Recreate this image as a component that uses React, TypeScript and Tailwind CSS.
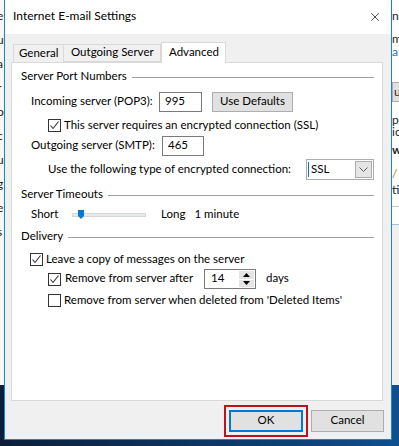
import { X } from "lucide-react";

function Check({ checked }: { checked: boolean }) {
  return (
    <span className="flex h-[13px] w-[13px] shrink-0 items-center justify-center border border-[#333333] bg-white">
      {checked && (
        <svg width="11" height="11" viewBox="0 0 11 11">
          <path d="M1.5 5.5 L4 8.5 L9.5 1.5" fill="none" stroke="#333333" strokeWidth="1.1" />
        </svg>
      )}
    </span>
  );
}

function GroupTitle({ title, className }: { title: string; className?: string }) {
  return (
    <div className={`flex h-[14px] items-center gap-[5px] ${className ?? ""}`}>
      <span className="pb-[2px]">{title}</span>
      <span className="h-px flex-1 bg-[#a0a0a0]" />
    </div>
  );
}

export default function App() {
  return (
    <div
      className="relative h-[446px] w-[399px] overflow-hidden whitespace-nowrap bg-gradient-to-r from-[#0a1f3c] via-[#0b3563] to-[#0e4f8f] text-[11.5px] leading-none text-black"
      style={{ fontFamily: 'Lato, "Liberation Sans", sans-serif' }}
    >
      {/* window behind the dialog */}
      <div className="flex h-[385px] w-full justify-between bg-[#f7f7f7] text-[12px] text-[#222]">
        <div className="flex flex-col gap-[14px] pt-[10px]">
          {["e", "u", "a", "r", "o", "c", "u", "g", "e", "s"].map((c, i) => (
            <span key={i} className="-ml-[3px] block h-[10px]">
              {c}
            </span>
          ))}
        </div>
        <div className="flex w-[7px] flex-col overflow-hidden bg-white">
          <span className="mt-[10px] h-[10px]">n</span>
          <span className="mt-[13px] h-[10px]">me</span>
          <span className="mt-[3px] h-[10px] text-[#1a6fc0]">a</span>
          <span className="mt-[26px] flex h-[20px] items-center border-y border-l border-[#adadad] bg-[#e1e1e1] pl-px">u</span>
          <span className="mt-[12px] h-[10px]">pr</span>
          <span className="mt-[2px] h-[10px]">ic</span>
          <span className="mt-[8px] h-[10px] font-bold">w</span>
          <span className="mt-[14px] h-[10px] text-[#c08000]">/</span>
          <span className="mt-[6px] h-[10px]">ti</span>
          <span className="mt-[12px] h-px bg-[#c8c8c8]" />
          <span className="mt-[17px] h-px bg-[#9cc3e6]" />
          <span className="flex-1 bg-[#f0f0f0]" />
        </div>
      </div>

      {/* dialog */}
      <div className="absolute left-[4px] top-0 flex h-[440px] w-[388px] flex-col border-x border-b border-[#1883d7] bg-[#f0f0f0]">
        <div className="flex h-[34px] shrink-0 items-center justify-between bg-white pl-[8px] pr-[9px]">
          <span className="pb-[2px] text-[12px]">Internet E-mail Settings</span>
          <X size={14} strokeWidth={1.2} className="text-black" />
        </div>

        {/* tabs */}
        <div className="mt-[8px] flex h-[20px] items-end pl-[8px]">
          <div className="flex h-[18px] w-[51px] items-center border border-b-0 border-[#d9d9d9] pb-[2px] pl-[5px]">General</div>
          <div className="flex h-[18px] w-[97px] items-center border-y border-r border-[#d9d9d9] pb-[2px] pl-[7px]">Outgoing Server</div>
          <div className="relative z-10 -mb-px flex h-[21px] w-[65px] items-center border border-b-0 border-[#d9d9d9] bg-white pb-[3px] pl-[7px]">Advanced</div>
        </div>

        {/* panel */}
        <div className="ml-[6px] flex h-[339px] w-[372px] flex-col border border-[#d9d9d9] bg-white pl-[9px] pr-[8px]">
          <GroupTitle title="Server Port Numbers" className="mt-[7px]" />

          <div className="mt-[8px] flex h-[20px] items-center">
            <span className="ml-[10px] w-[128px] pb-[2px]">Incoming server (POP3):</span>
            <div className="flex h-[20px] w-[43px] items-center border border-[#7a7a7a] pb-[2px] pl-[5px]">995</div>
            <button className="ml-[10px] h-[20px] w-[81px] border border-[#adadad] bg-[#e1e1e1] pb-[2px]">Use Defaults</button>
          </div>

          <div className="mt-[7px] flex h-[13px] items-center gap-[3px] pl-[27px]">
            <Check checked />
            <span className="pb-[2px]">This server requires an encrypted connection (SSL)</span>
          </div>

          <div className="mt-[4px] flex h-[20px] items-center">
            <span className="ml-[10px] w-[131px] pb-[2px]">Outgoing server (SMTP):</span>
            <div className="flex h-[20px] w-[42px] items-center border border-[#7a7a7a] pb-[2px] pl-[5px]">465</div>
          </div>

          <div className="mt-[3px] flex h-[21px] items-center">
            <span className="ml-[27px] w-[258px] pb-[2px]">Use the following type of encrypted connection:</span>
            <div className="flex h-[21px] w-[68px] items-center border border-[#adadad] bg-white p-px">
              <span className="mr-[2px] h-[15px] w-px bg-[#0078d7]" />
              <span className="flex-1 pb-[2px]">SSL</span>
              <span className="flex h-[17px] w-[17px] items-center justify-center border border-[#adadad] bg-[#e5e5e5]">
                <svg width="9" height="5" viewBox="0 0 9 5">
                  <path d="M0.5 0.5 L4.5 4.5 L8.5 0.5" fill="none" stroke="#606060" strokeWidth="1" />
                </svg>
              </span>
            </div>
          </div>

          <GroupTitle title="Server Timeouts" className="mt-[8px]" />

          <div className="mt-[6px] flex h-[14px] items-center">
            <span className="ml-[10px] w-[41px] pb-[2px]">Short</span>
            <div className="relative h-[4px] w-[74px] border border-[#d6d6d6] bg-[#e7eaea]">
              <svg className="absolute -top-[4px] left-[5px]" width="6" height="9" viewBox="0 0 6 9">
                <path d="M0 0 H6 V6 L3 9 L0 6 Z" fill="#0078d7" />
              </svg>
            </div>
            <span className="ml-[15px] pb-[2px]">Long</span>
            <span className="ml-[9px] pb-[2px]">1 minute</span>
          </div>

          <GroupTitle title="Delivery" className="mt-[8px]" />

          <div className="mt-[9px] flex h-[13px] items-center gap-[3px] pl-[9px]">
            <Check checked />
            <span className="pb-[2px]">Leave a copy of messages on the server</span>
          </div>

          <div className="mt-[3px] flex h-[20px] items-center pl-[27px]">
            <Check checked />
            <span className="ml-[4px] w-[139px] pb-[2px]">Remove from server after</span>
            <div className="flex h-[20px] w-[52px] items-center border border-[#7a7a7a]">
              <span className="flex-1 pb-[2px] pl-[6px]">14</span>
              <div className="mr-px flex h-[16px] w-[15px] flex-col gap-px">
                <span className="flex flex-1 items-center justify-center bg-[#e5e5e5]">
                  <svg width="7" height="4" viewBox="0 0 7 4"><path d="M0 4 L3.5 0 L7 4 Z" fill="#000" /></svg>
                </span>
                <span className="flex flex-1 items-center justify-center bg-[#e5e5e5]">
                  <svg width="7" height="4" viewBox="0 0 7 4"><path d="M0 0 L3.5 4 L7 0 Z" fill="#000" /></svg>
                </span>
              </div>
            </div>
            <span className="ml-[10px] pb-[3px]">days</span>
          </div>

          <div className="mt-[5px] flex h-[13px] items-center gap-[3px] pl-[27px]">
            <Check checked={false} />
            <span className="pb-[2px]">Remove from server when deleted from 'Deleted Items'</span>
          </div>
        </div>

        {/* buttons */}
        <div className="mt-[4px] flex justify-end gap-[3px] pr-[7px]">
          <div className="border-2 border-[#c0101a] p-[3px]">
            <button className="h-[22px] w-[74px] border-2 border-[#0078d7] bg-[#e1e1e1] pb-[2px]">OK</button>
          </div>
          <button className="mt-[5px] h-[22px] w-[73px] border border-[#adadad] bg-[#e1e1e1] pb-[2px]">Cancel</button>
        </div>
      </div>
    </div>
  );
}
